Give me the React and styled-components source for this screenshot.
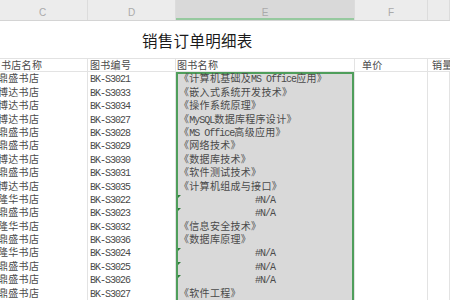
import React from 'react';
import styled, { createGlobalStyle } from 'styled-components';

const Global = createGlobalStyle`
  html, body { margin: 0; padding: 0; background: #fff; overflow: hidden; }
  body { width: 450px; height: 300px; }
`;

const COLS = '90px 88px 179px 73px 1fr';
const GREEN = '#4f9e5b';

const Sheet = styled.div`
  width: 452px;
  margin-left: -2px;
  overflow: hidden;
  font-family: "Noto Sans CJK SC", sans-serif;
`;

const HeadBar = styled.div`
  display: grid;
  grid-template-columns: ${COLS};
  height: 21px;
  box-sizing: border-box;
  background: #ececec;
  border-bottom: 1px solid #d4d4d4;
`;

const ColLetter = styled.div`
  display: flex;
  align-items: center;
  justify-content: center;
  padding-top: 4px;
  box-sizing: border-box;
  font-family: "Liberation Sans", sans-serif;
  font-size: 10px;
  color: #aaaaaa;
  border-right: 1px solid #dcdcdc;
  background: ${p => (p.$active ? '#d9d9d9' : 'transparent')};
  box-shadow: ${p => (p.$active ? 'inset 0 -2px 0 #96c99f' : 'none')};
`;

const TitleRow = styled.div`
  height: 38px;
  box-sizing: border-box;
  border-bottom: 1px solid #e2e2e2;
  padding-left: 144px;
  display: flex;
  align-items: center;
  font-size: 15.5px;
  line-height: 18px;
  letter-spacing: 0.3px;
  color: #1a1a1a;
`;

const Row = styled.div`
  display: grid;
  grid-template-columns: ${COLS};
  height: 13.4px;
`;

const selShadow = p => {
  if (!p.$sel) return 'none';
  const s = [`inset 2px 0 0 ${GREEN}`, `inset -2px 0 0 ${GREEN}`];
  if (p.$selTop) s.push(`inset 0 2px 0 ${GREEN}`);
  return s.join(', ');
};

const Cell = styled.div`
  position: relative;
  box-sizing: border-box;
  height: 100%;
  border-bottom: 1px solid ${p => (p.$fill ? '#ececec' : '#e3e3e3')};
  border-right: 1px solid #e3e3e3;
  background: ${p => (p.$fill ? '#d9d9d9' : '#fff')};
  padding-left: ${p => (p.$indent ?? 2)}px;
  font-size: 10px;
  line-height: 12.4px;
  letter-spacing: 0.3px;
  color: #4a4a4a;
  white-space: nowrap;
  text-align: ${p => (p.$center ? 'center' : 'left')};
  box-shadow: ${selShadow};
`;

const Latin = styled.span`
  font-family: "Liberation Mono", monospace;
  font-size: 10px;
  letter-spacing: -1px;
`;

const ErrMark = styled.span`
  position: absolute;
  left: 2px;
  top: 2px;
  width: 0;
  height: 0;
  border-top: 3px solid #2e7d3b;
  border-right: 3px solid transparent;
`;

const rows = [
  ['鼎盛书店', 'BK-S3021', '《计算机基础及MS Office应用》'],
  ['博达书店', 'BK-S3033', '《嵌入式系统开发技术》'],
  ['博达书店', 'BK-S3034', '《操作系统原理》'],
  ['博达书店', 'BK-S3027', '《MySQL数据库程序设计》'],
  ['鼎盛书店', 'BK-S3028', '《MS Office高级应用》'],
  ['鼎盛书店', 'BK-S3029', '《网络技术》'],
  ['博达书店', 'BK-S3030', '《数据库技术》'],
  ['鼎盛书店', 'BK-S3031', '《软件测试技术》'],
  ['博达书店', 'BK-S3035', '《计算机组成与接口》'],
  ['隆华书店', 'BK-S3022', '#N/A'],
  ['鼎盛书店', 'BK-S3023', '#N/A'],
  ['隆华书店', 'BK-S3032', '《信息安全技术》'],
  ['鼎盛书店', 'BK-S3036', '《数据库原理》'],
  ['隆华书店', 'BK-S3024', '#N/A'],
  ['鼎盛书店', 'BK-S3025', '#N/A'],
  ['鼎盛书店', 'BK-S3026', '#N/A'],
  ['鼎盛书店', 'BK-S3027', '《软件工程》'],
];

const LATIN_RUN = /([A-Za-z0-9#/\- ]+)/;

function Mixed({ text }) {
  const parts = text.split(LATIN_RUN).filter(Boolean);
  return parts.map((t, i) =>
    /^[A-Za-z0-9#/\- ]+$/.test(t) ? <Latin key={i}>{t}</Latin> : <React.Fragment key={i}>{t}</React.Fragment>
  );
}

export default function App() {
  return (
    <>
      <Global />
      <Sheet>
        <HeadBar>
          <ColLetter>C</ColLetter>
          <ColLetter>D</ColLetter>
          <ColLetter $active>E</ColLetter>
          <ColLetter>F</ColLetter>
          <ColLetter />
        </HeadBar>
        <TitleRow>销售订单明细表</TitleRow>
        <Row>
          <Cell $indent={3}>书店名称</Cell>
          <Cell>图书编号</Cell>
          <Cell $indent={1}>图书名称</Cell>
          <Cell $indent={7}>单价</Cell>
          <Cell $indent={4}>销量</Cell>
        </Row>
        {rows.map(([shop, code, name], i) => {
          const err = name === '#N/A';
          return (
            <Row key={i}>
              <Cell $indent={0}>{shop}</Cell>
              <Cell><Latin>{code}</Latin></Cell>
              <Cell $fill $sel $selTop={i === 0} $center={err} $indent={err ? 0 : 3}>
                {err && <ErrMark />}
                <Mixed text={name} />
              </Cell>
              <Cell />
              <Cell />
            </Row>
          );
        })}
      </Sheet>
    </>
  );
}
